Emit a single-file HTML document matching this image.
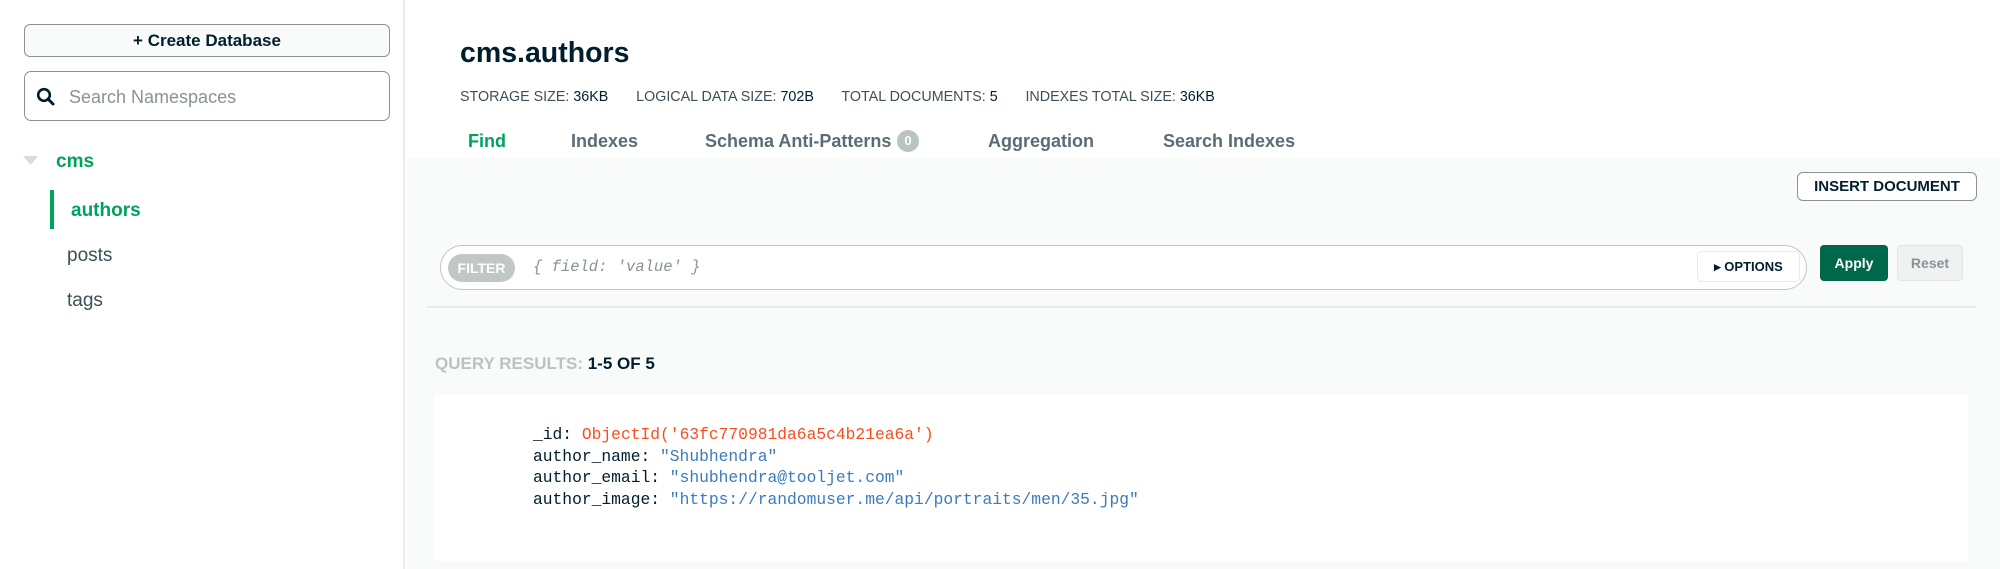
<!DOCTYPE html>
<html><head><meta charset="utf-8"><style>
*{box-sizing:border-box;margin:0;padding:0}
body{width:2000px;height:569px;overflow:hidden;background:#fff;font-family:"Liberation Sans",sans-serif;position:relative;color:#001e2b}
.abs{position:absolute}
.side{left:0;top:0;width:405px;height:569px;border-right:2px solid #e8edeb;background:#fff}
.btn1{left:24px;top:24px;width:366px;height:33px;border:1.5px solid #889397;border-radius:6px;background:#f9fbfa;font-weight:bold;font-size:17px;text-align:center;line-height:32px}
.search{left:24px;top:71px;width:366px;height:50px;border:1.5px solid #889397;border-radius:7px;font-size:18px;color:#889397;line-height:50px;padding-left:44px}
.nav{font-size:19px}
.gray{left:407px;top:158px;width:1593px;height:411px;background:#f9fbfa}
.tab{top:131px;font-size:18px;font-weight:bold;color:#5c6c75}
.mono{font-family:"Liberation Mono",monospace;font-size:16.3px;line-height:21.7px}
</style></head><body>
<div class="abs side"></div>
<div class="abs btn1">+ Create Database</div>
<div class="abs search">Search Namespaces</div>
<svg class="abs" style="left:36px;top:87px" width="20" height="20" viewBox="0 0 20 20"><circle cx="8" cy="8" r="5.8" fill="none" stroke="#001e2b" stroke-width="2.6"/><path d="M12 12l5 5" stroke="#001e2b" stroke-width="3" stroke-linecap="round"/></svg>
<svg class="abs" style="left:23px;top:156px" width="16" height="10"><path d="M0 0h15l-7.5 9z" fill="#d8dcdc"/></svg>
<div class="abs nav" style="left:56px;top:151px;color:#00a35c;font-weight:bold">cms</div>
<div class="abs" style="left:50px;top:190px;width:4px;height:39px;background:#00a35c"></div>
<div class="abs nav" style="left:71px;top:200px;color:#00a35c;font-weight:bold">authors</div>
<div class="abs nav" style="left:67px;top:245px;color:#3d4f58">posts</div>
<div class="abs nav" style="left:67px;top:290px;color:#3d4f58">tags</div>

<div class="abs" style="left:460px;top:37px;font-size:28.5px;font-weight:bold;color:#001e2b">cms.authors</div>
<div class="abs" style="left:460px;top:89px;font-size:14.3px;color:#3d4f58;white-space:pre">STORAGE SIZE: <span style="color:#001e2b">36KB</span>       LOGICAL DATA SIZE: <span style="color:#001e2b">702B</span>       TOTAL DOCUMENTS: <span style="color:#001e2b">5</span>       INDEXES TOTAL SIZE: <span style="color:#001e2b">36KB</span></div>
<div class="abs tab" style="left:468px;color:#00a35c">Find</div>
<div class="abs tab" style="left:571px">Indexes</div>
<div class="abs tab" style="left:705px">Schema Anti-Patterns</div>
<div class="abs" style="left:897px;top:130px;width:22px;height:22px;border-radius:11px;background:#b8c4c2;color:#fff;font-size:13px;text-align:center;line-height:22px;font-weight:bold">0</div>
<div class="abs tab" style="left:988px">Aggregation</div>
<div class="abs tab" style="left:1163px">Search Indexes</div>

<div class="abs gray"></div>
<div class="abs" style="left:1797px;top:172px;width:180px;height:29px;border:1.5px solid #889397;border-radius:6px;background:#fff;font-size:15px;font-weight:bold;text-align:center;line-height:27px">INSERT DOCUMENT</div>
<div class="abs" style="left:440px;top:245px;width:1367px;height:45px;border:1.5px solid #c1c7c6;border-radius:23px;background:#fff"></div>
<div class="abs" style="left:448px;top:254px;width:67px;height:28px;border-radius:14px;background:#c1c7c6;color:#fff;font-size:14px;font-weight:bold;text-align:center;line-height:28px">FILTER</div>
<div class="abs mono" style="left:533px;top:257px;color:#889397;font-style:italic;font-size:15.5px">{ field: 'value' }</div>
<div class="abs" style="left:1697px;top:251px;width:103px;height:31px;border:1.5px solid #e8edeb;border-radius:4px;background:#fff;font-size:13px;font-weight:bold;line-height:30px;text-align:center">▸ OPTIONS</div>
<div class="abs" style="left:1820px;top:245px;width:68px;height:36px;background:#00684a;border-radius:4px;color:#fff;font-size:14px;font-weight:bold;text-align:center;line-height:36px">Apply</div>
<div class="abs" style="left:1897px;top:245px;width:66px;height:36px;background:#f0f2f1;border:1px solid #e1e5e4;border-radius:4px;color:#889397;font-size:14px;font-weight:bold;text-align:center;line-height:34px">Reset</div>
<div class="abs" style="left:427px;top:306px;width:1549px;height:1.5px;background:#e8edeb"></div>
<div class="abs" style="left:435px;top:354px;font-size:17px;font-weight:bold;color:#b8c4c2">QUERY RESULTS: <span style="color:#001e2b">1-5 OF 5</span></div>
<div class="abs" style="left:434px;top:395px;width:1534px;height:166px;background:#fff"></div>
<div class="abs mono" style="left:533px;top:424px;color:#001e2b;white-space:pre">_id: <span style="color:#fa4d1e">ObjectId('63fc770981da6a5c4b21ea6a')</span>
author_name: <span style="color:#3b7bbd">"Shubhendra"</span>
author_email: <span style="color:#3b7bbd">"shubhendra@tooljet.com"</span>
author_image: <span style="color:#3b7bbd">"https://randomuser.me/api/portraits/men/35.jpg"</span></div>
</body></html>
